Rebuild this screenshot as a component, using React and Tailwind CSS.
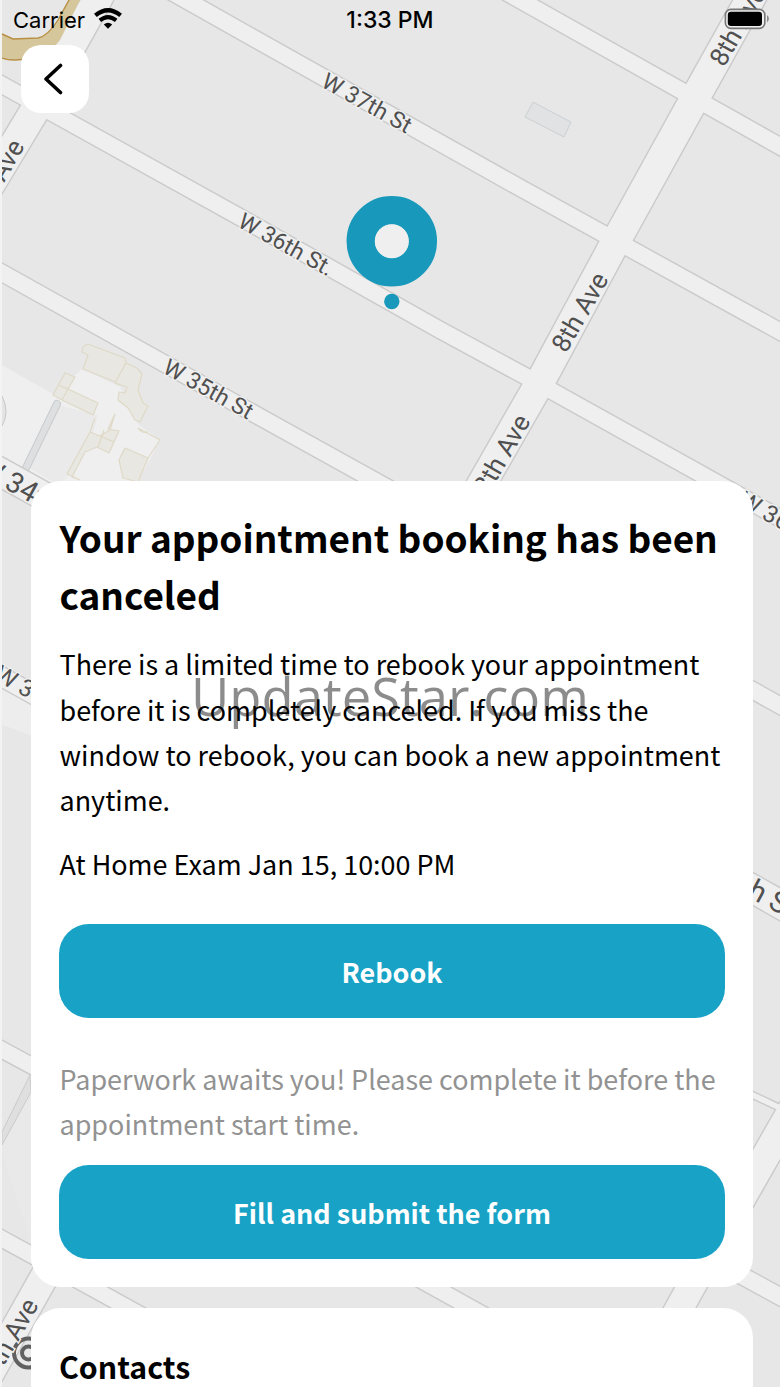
const UI_FONT = "font-['Noto_Sans_CJK_SC','Open_Sans',sans-serif]";

// Centre lines of the streets, drawn twice: a wide edge and a narrower fill.
const STREETS = [
  { d: 'M440 -45L600 45L745 126.5L790 152', w: 17.5 },
  { d: 'M170 -9L260 41.8L520 187.8L620 243L790 337', w: 17.5 },
  { d: 'M-5 81L241 217.8L440 330L525 376L700 473.5L790 524', w: 17.5 },
  { d: 'M-5 269L260 417L790 711', w: 17.5 },
  { d: 'M-5 469L753 889L790 910', w: 29 },
  { d: 'M-5 673L130 748', w: 20 },
  { d: 'M-5 1046L60 1081', w: 17 },
  { d: 'M-5 1235L92 1288L150 1320', w: 17 },
  { d: 'M410 1274L500 1324', w: 17 },
  { d: 'M740 1089L780 1108', w: 7 },
  { d: 'M735 1272L790 1302', w: 18 },
  { d: 'M766 -30L749.7 0L695 98L616 241L539 384L484 480L460 522', w: 30 },
  { d: 'M113 -30L97 0L38 105L-25 210', w: 30 },
  { d: 'M60 1249L38.5 1287L-25 1400', w: 29 },
  { d: 'M797 1101L690.5 1288L670 1325', w: 29 },
];

const LABELS = [
  { text: 'W 37th St', x: 320, y: 86, r: 29, size: 22.9 },
  { text: 'W 36th St.', x: 236.5, y: 226, r: 29, size: 22.9 },
  { text: 'W 35th St', x: 161.5, y: 372, r: 29, size: 22.9 },
  { text: '8th Ave', x: 566, y: 354, r: -60, size: 26 },
  { text: '8th Ave', x: 488, y: 496, r: -60, size: 26 },
  { text: '8th Ave', x: 724, y: 68, r: -60, size: 26 },
  { text: '9th Ave', x: -18, y: 221, r: -60, size: 26 },
  { text: '9th Ave', x: -4, y: 1380, r: -60, size: 26 },
  { text: 'W 34th St', x: -25, y: 472, r: 29, size: 28.5 },
  { text: 'W 33rd St', x: -7, y: 679, r: 29, size: 24 },
  { text: 'W 36th St', x: 737, y: 505, r: 29, size: 24 },
  { text: 'W 34th St', x: 680, y: 861, r: 28, size: 29 },
];

function MapCanvas() {
  return (
    <svg viewBox="0 0 780 1387" className="absolute inset-0 h-full w-full" aria-hidden="true">
      <rect width="780" height="1387" fill="#e7e7e7" />

      {/* plaza and station buildings */}
      <path d="M2 365L53 394L82 369L120 387L138 424L160 440L138 482L0 482Z" fill="#efefef" />
      <path d="M98 415L94 430L69 474L60 486L30 468L58 405Z" fill="#eaeaea" />
      <path d="M2 396Q10 412 2 426" fill="#e4e4e4" stroke="#c6c8ca" />
      <path d="M57 404L25 470" stroke="#c9cbcd" strokeWidth="8" strokeLinecap="round" />
      <path d="M57 404L25 470" stroke="#dedfe0" strokeWidth="6" strokeLinecap="round" />
      <g fill="#e8e7e2" stroke="#dfd9c6" strokeWidth="1.2" strokeLinejoin="round">
        <path d="M83 347L88 344L125 358L126 363L118 383L83 369L88 355L82 352Z" />
        <path d="M126 363L137 368L142 374L138 390L143 403L148 406L140 422L135 420L128 408L118 400L119 392L125 393L127 387L115 383Z" />
        <path d="M65 373L75 377L68 389L98 403L93 415L62 400L53 395Z" />
        <path d="M58 385L68 389L62 400" />
        <path d="M95 418L90 432L100 436L110 430L115 414L108 429L119 431L109 453L97 447L85 452L72 477L80 480L67 474L90 432" />
        <path d="M100 436L114 442M104 430L98 447" />
        <path d="M125 448L148 458L138 482L123 478L119 460Z" />
        <path d="M138 428L160 440L148 458M138 428Q142 434 148 432" fill="none" />
      </g>

      <path d="M0 684L60 716L60 746L0 724Z" fill="#ededed" />
      <path d="M30 1090L60 1080L60 1250L30 1240L0 1146Z" fill="#e9e9e9" />

      <g fill="none" stroke="#cacaca">
        {STREETS.map((s) => <path key={s.d} d={s.d} strokeWidth={s.w + 1.4} />)}
      </g>
      <g fill="none" stroke="#efefef">
        {STREETS.map((s) => <path key={s.d} d={s.d} strokeWidth={s.w - 1.4} />)}
      </g>

      <path d="M2 34L13 39L38 38Q48 36 58 20L69 0L80 0L60 40L45 58Q20 62 2 57Z" fill="#d5c69c" />
      <path d="M2 34L13 39L38 38Q48 36 58 20L69 0M2 58Q13 62 30 58" fill="none" stroke="#b88f42" strokeWidth="1.4" />
      <path d="M533 102L571 122L564 137L525 117Z" fill="#e0e2e4" stroke="#cdd0d2" />
      <path d="M30 1075L2 1132V1145L31 1092Z" fill="#dfdfdf" stroke="#cbcbcb" />

      <g fill="none" stroke="#606060" strokeWidth="4">
        <circle cx="28.5" cy="1353" r="14.5" />
        <circle cx="28.5" cy="1353" r="6.5" />
      </g>

      <g fill="#505050" stroke="#efefef" strokeWidth="3" paintOrder="stroke" className="font-['Roboto',sans-serif]">
        {LABELS.map((l) => (
          <text key={`${l.x}-${l.y}`} fontSize={l.size} transform={`translate(${l.x} ${l.y}) rotate(${l.r})`}>
            {l.text}
          </text>
        ))}
      </g>

      {/* office pin */}
      <circle cx="391.8" cy="241.2" r="31" fill="none" stroke="#1899bb" strokeWidth="28.5" />
      <circle cx="391.8" cy="241.2" r="17" fill="#efefef" />
      <circle cx="391.8" cy="301.5" r="7.7" fill="#1899bb" />
      <rect width="2" height="1387" fill="#f3f3f3" />
    </svg>
  );
}

function StatusBar() {
  return (
    <div className="relative grid h-10 grid-cols-3 items-center pl-[13px] pr-[10px] font-['Inter',sans-serif] text-[22px] text-black">
      <div className="flex items-center gap-[9px]">
        <span>Carrier</span>
        <WifiIcon />
      </div>
      <span className="-ml-[3px] text-center text-[23px] font-medium">1:33 PM</span>
      <div className="flex justify-end"><BatteryIcon /></div>
    </div>
  );
}

function WifiIcon() {
  return (
    <svg viewBox="0 0 28 21" className="-mt-[3px] h-[21px] w-[28px]" fill="none" stroke="currentColor" aria-hidden="true">
      <path d="M1.4 7.4Q14 -2.8 26.6 7.4" strokeWidth="4.4" />
      <path d="M5.8 12.4Q14 5.8 22.2 12.4" strokeWidth="4" />
      <path d="M9.8 16.6Q14 13 18.2 16.6L14 20.8Z" fill="currentColor" stroke="none" />
    </svg>
  );
}

function BatteryIcon() {
  return (
    <svg viewBox="0 0 46 22" className="-mt-[2px] h-[22px] w-[46px]" aria-hidden="true">
      <rect x="1.4" y="1.4" width="39.4" height="19" rx="5.5" fill="#efefef" stroke="#777" strokeWidth="1.6" />
      <rect x="3.8" y="3.8" width="34.2" height="14.2" rx="3.2" fill="#000" />
      <path d="M43.2 7Q46.4 10.7 43.2 14.4Z" fill="#777" />
    </svg>
  );
}

function PrimaryButton({ children }) {
  return (
    <button className="h-[94px] w-full rounded-[30px] bg-[#17a2c6] pt-[2px] text-[26.95px] font-bold text-white">
      {children}
    </button>
  );
}

export default function App() {
  return (
    <div className={`relative h-[1387px] w-[780px] overflow-hidden text-black ${UI_FONT}`}>
      <MapCanvas />
      <StatusBar />

      <button aria-label="Back" className="relative ml-[21px] mt-[5px] grid h-[68px] w-[68px] place-items-center rounded-[20px] bg-white">
        <svg viewBox="0 0 20 32" className="-ml-[5px] h-8 w-5" fill="none" stroke="currentColor" strokeWidth="3.6" strokeLinecap="round" strokeLinejoin="round" aria-hidden="true">
          <path d="M17.5 2.5L3 16L17.5 29.5" />
        </svg>
      </button>

      <main className="relative ml-[31px] mt-[368px] flex w-[722px] flex-col gap-[21px]">
        <section className="h-[806px] rounded-[30px] bg-white px-[28px] pt-[28px]">
          <h1 className="whitespace-nowrap pl-[0.5px] text-[36.95px] font-bold leading-[56.6px]">
            Your appointment booking has been<br />canceled
          </h1>
          <p className="mt-[19.2px] whitespace-nowrap pl-[0.5px] text-[26.95px] leading-[45.2px]">
            There is a limited time to rebook your appointment<br />
            before it is completely canceled. If you miss the<br />
            window to rebook, you can book a new appointment<br />
            anytime.
          </p>
          <p className="mb-[38px] mt-[18.6px] pl-[0.5px] text-[26.95px] leading-[45px]">At Home Exam Jan 15, 10:00 PM</p>
          <PrimaryButton>Rebook</PrimaryButton>
          <p className="mb-[19px] mt-[38px] whitespace-nowrap pl-[0.5px] text-[26.95px] leading-[45px] text-[#929292]">
            Paperwork awaits you! Please complete it before the<br />appointment start time.
          </p>
          <PrimaryButton>Fill and submit the form</PrimaryButton>
        </section>
        <section className="h-[120px] rounded-[30px] bg-white px-[28px] pt-[35px]">
          <h2 className="text-[30.3px] font-bold leading-[46px]">Contacts</h2>
        </section>
      </main>

      <span className="absolute left-[191px] top-[666px] whitespace-nowrap font-['Open_Sans',sans-serif] text-[52.6px] leading-[60px] text-black/45">
        UpdateStar.com
      </span>
    </div>
  );
}
